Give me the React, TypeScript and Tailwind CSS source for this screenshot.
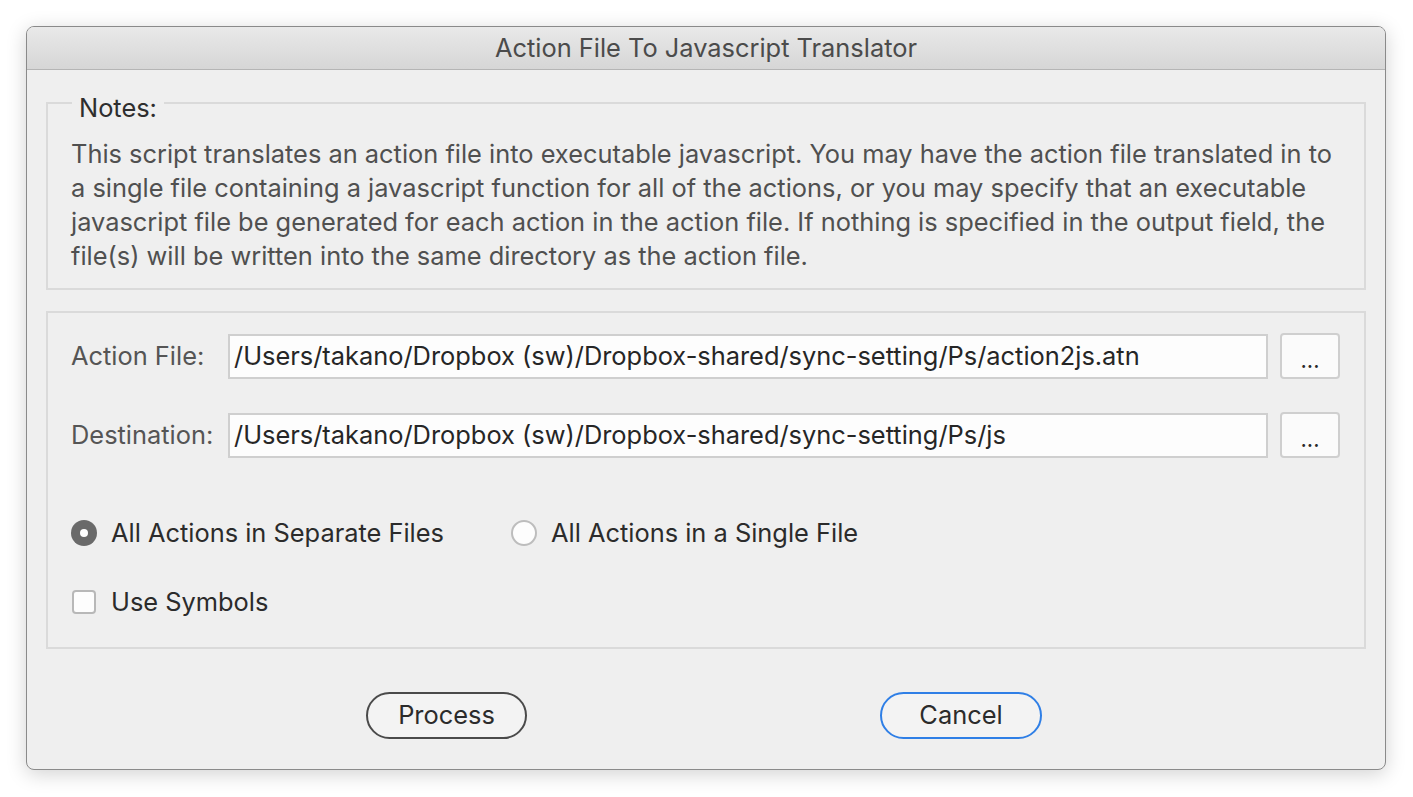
import React from "react";

export default function App() {
  const font = { fontFamily: "Inter, 'Noto Sans', sans-serif" };
  return (
    <div className="w-[1413px] h-[797px] bg-white pt-[26px] pl-[26px]" style={font}>
      <div className="w-[1360px] h-[744px] flex flex-col rounded-[8px] border border-[#8a8a8a] bg-[#efefef] shadow-[0_4px_20px_rgba(0,0,0,0.18)] overflow-hidden">
        <div className="h-[43px] shrink-0 flex items-center justify-center border-b border-[#b5b5b5] bg-gradient-to-b from-[#e9e9e9] to-[#d6d6d6] text-[25.4px] text-[#4b4b4b]">
          Action File To Javascript Translator
        </div>
        <div className="flex flex-col px-[19px]">
          <fieldset className="mt-[15px] h-[205px] border-2 border-[#dadada] pl-[23px] pr-[10px] m-0">
            <legend className="ml-[1px] px-[7px] pt-[11px] text-[25.4px] leading-[24px] text-[#2e2e2e]">Notes:</legend>
            <div className="mt-[17px] text-[25.4px] leading-[34px] text-[#505050]">
              <div>This script translates an action file into executable javascript. You may have the action file translated in to</div>
              <div>a single file containing a javascript function for all of the actions, or you may specify that an executable</div>
              <div>javascript file be generated for each action in the action file. If nothing is specified in the output field, the</div>
              <div>file(s) will be written into the same directory as the action file.</div>
            </div>
          </fieldset>
          <div className="mt-[21px] h-[338px] border-2 border-[#dadada] pl-[23px] pr-[24px] flex flex-col">
            <div className="mt-[20px] h-[46px] flex items-center">
              <div className="w-[157px] text-[25.4px] text-[#555555]">Action File:</div>
              <div className="w-[1040px] h-[45px] border-2 border-[#cfcfcf] bg-[#fdfdfd] flex items-center pl-[4px] text-[25.4px] text-[#262626] whitespace-nowrap">
                /Users/takano/Dropbox (sw)/Dropbox-shared/sync-setting/Ps/action2js.atn
              </div>
              <button className="ml-[12px] w-[60px] h-[46px] rounded-[4px] border-2 border-[#cfcfcf] bg-[#fbfbfb] text-[22px] text-[#2a2a2a] leading-none pt-[8px]">...</button>
            </div>
            <div className="mt-[33px] h-[46px] flex items-center">
              <div className="w-[157px] text-[25.4px] text-[#555555]">Destination:</div>
              <div className="w-[1040px] h-[45px] border-2 border-[#cfcfcf] bg-[#fdfdfd] flex items-center pl-[4px] text-[25.4px] text-[#262626] whitespace-nowrap">
                /Users/takano/Dropbox (sw)/Dropbox-shared/sync-setting/Ps/js
              </div>
              <button className="ml-[12px] w-[60px] h-[46px] rounded-[4px] border-2 border-[#cfcfcf] bg-[#fbfbfb] text-[22px] text-[#2a2a2a] leading-none pt-[8px]">...</button>
            </div>
            <div className="mt-[55px] h-[40px] flex items-center">
              <div className="w-[440px] flex items-center">
                <div className="w-[26px] h-[26px] rounded-full bg-[#6a6a6a] flex items-center justify-center">
                  <div className="w-[8px] h-[8px] rounded-full bg-white" />
                </div>
                <span className="ml-[14px] text-[25.4px] text-[#2b2b2b]">All Actions in Separate Files</span>
              </div>
              <div className="flex items-center">
                <div className="w-[26px] h-[26px] rounded-full border-2 border-[#bdbdbd] bg-[#fdfdfd]" />
                <span className="ml-[14px] text-[25.4px] text-[#2b2b2b]">All Actions in a Single File</span>
              </div>
            </div>
            <div className="mt-[29px] h-[40px] flex items-center">
              <div className="ml-[1px] w-[24px] h-[24px] rounded-[4px] border-2 border-[#b8b8b8] bg-[#fdfdfd]" />
              <span className="ml-[15px] text-[25.4px] text-[#2b2b2b]">Use Symbols</span>
            </div>
          </div>
          <div className="mt-[43px] flex justify-center gap-[353px] pr-[4px]">
            <button className="w-[161px] h-[47px] rounded-full border-2 border-[#4a4a4a] bg-[#f3f3f3] text-[25.4px] text-[#2b2b2b]">Process</button>
            <button className="w-[162px] h-[47px] rounded-full border-2 border-[#2f7fe6] bg-[#f3f3f3] text-[25.4px] text-[#2b2b2b]">Cancel</button>
          </div>
        </div>
      </div>
    </div>
  );
}
